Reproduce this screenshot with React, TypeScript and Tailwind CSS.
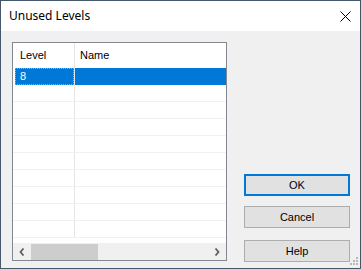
import React from "react";

const rows = Array.from({ length: 10 });

function Chevron({ dir }: { dir: "left" | "right" }) {
  return (
    <svg width="6" height="8" viewBox="0 0 6 8" className="block">
      {dir === "left" ? (
        <path d="M4.5 0.5 L1.5 4 L4.5 7.5" fill="none" stroke="#606060" strokeWidth="1.8" />
      ) : (
        <path d="M1.5 0.5 L4.5 4 L1.5 7.5" fill="none" stroke="#606060" strokeWidth="1.8" />
      )}
    </svg>
  );
}

function Btn({ label, focus }: { label: string; focus?: boolean }) {
  return (
    <button
      className={`h-[22px] w-[106px] bg-[#e1e1e1] text-[11px] text-black flex items-center justify-center ${
        focus ? "border-2 border-[#0078d7]" : "border border-[#adadad]"
      }`}
    >
      {label}
    </button>
  );
}

export default function App() {
  return (
    <div
      className="relative w-[361px] h-[269px] border border-[#44576b] bg-[#f0f0f0] flex flex-col overflow-hidden"
      style={{ fontFamily: '"Liberation Sans", Arial, sans-serif' }}
    >
      <div className="h-[30px] bg-white flex items-center justify-between pl-[8px] pr-[9px] shrink-0">
        <span
          className="text-[12px] text-black"
          style={{ fontFamily: '"Segoe UI", "Noto Sans", sans-serif' }}
        >
          Unused Levels
        </span>
        <svg width="11" height="11" viewBox="0 0 11 11">
          <path d="M0.5 0.5 L10.5 10.5 M10.5 0.5 L0.5 10.5" stroke="#000" strokeWidth="1" />
        </svg>
      </div>

      <div className="flex flex-1">
        <div className="ml-[11px] mt-[11px] w-[215px] h-[219px] border border-[#828790] bg-white flex flex-col">
          <div className="h-[25px] flex text-[11px] text-black shrink-0">
            <div className="w-[61px] pl-[7px] flex items-center">Level</div>
            <div className="w-px bg-[#e5e5e5]" />
            <div className="flex-1 pl-[5px] flex items-center">Name</div>
          </div>
          <div className="h-[175px] overflow-hidden flex flex-col">
            {rows.map((_, i) => (
              <div
                key={i}
                className={`h-[17px] shrink-0 flex text-[11px] ${
                  i === 0 ? "" : "border-b border-[#f0f0f0]"
                }`}
              >
                <div className="w-[61px] flex">
                  {i === 0 && (
                    <div className="ml-[2px] flex-1 bg-[#0078d7] text-white pl-[5px] flex items-center outline outline-1 outline-dotted outline-[#f0a030] -outline-offset-1">
                      8
                    </div>
                  )}
                </div>
                <div className="w-px bg-[#e5e5e5]" />
                <div className={`flex-1 ${i === 0 ? "bg-[#0078d7]" : ""}`} />
              </div>
            ))}
          </div>
          <div className="h-[17px] bg-[#f0f0f0] flex items-center shrink-0">
            <div className="w-[18px] flex justify-center">
              <Chevron dir="left" />
            </div>
            <div className="w-[67px] h-[16px] bg-[#cdcdcd]" />
            <div className="flex-1" />
            <div className="w-[18px] flex justify-center">
              <Chevron dir="right" />
            </div>
          </div>
        </div>

        <div className="ml-[17px] mt-[143px] flex flex-col">
          <Btn label="OK" focus />
          <div className="mt-[10px]">
            <Btn label="Cancel" />
          </div>
          <div className="mt-[12px]">
            <Btn label="Help" />
          </div>
        </div>
      </div>

      <svg width="9" height="10" viewBox="0 0 9 10" className="absolute right-[1px] bottom-[1px]">
        <g fill="#b8b8b8">
          <rect x="6" y="0" width="2" height="2" />
          <rect x="3" y="3" width="2" height="2" />
          <rect x="6" y="3" width="2" height="2" />
          <rect x="0" y="6" width="2" height="2" />
          <rect x="3" y="6" width="2" height="2" />
          <rect x="6" y="6" width="2" height="2" />
        </g>
      </svg>
    </div>
  );
}
